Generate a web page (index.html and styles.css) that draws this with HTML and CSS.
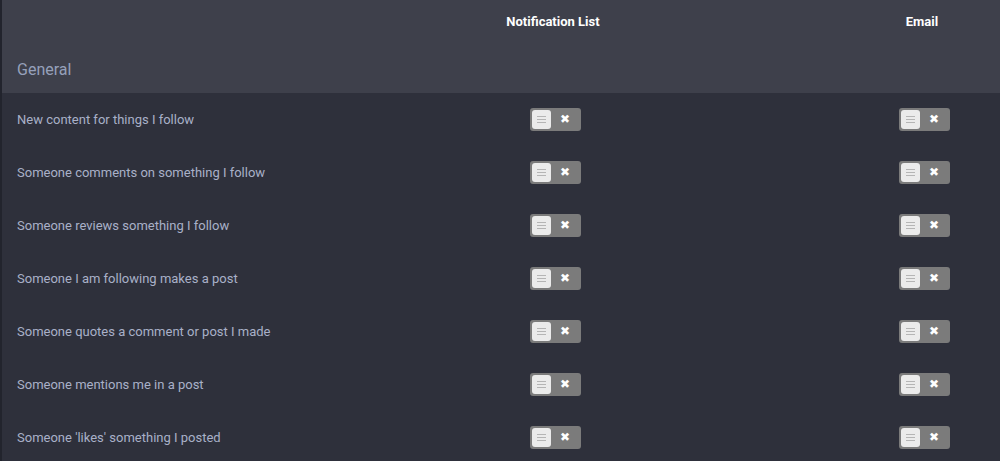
FILE: index.html
```html
<!DOCTYPE html>
<html>
<head>
<meta charset="utf-8">
<link rel="stylesheet" href="styles.css">
</head>
<body>
<div class="panel">
  <div class="head">
    <div class="cols">
      <div class="cell label"></div>
      <div class="cell col-title">Notification List</div>
      <div class="cell col-title">Email</div>
    </div>
    <div class="group">General</div>
  </div>
  <div class="rows">
    <div class="row"><div class="cell label">New content for things I follow</div><div class="cell"><span class="toggle"><span class="knob"><i></i><i></i><i></i></span><span class="x">✖</span></span></div><div class="cell"><span class="toggle"><span class="knob"><i></i><i></i><i></i></span><span class="x">✖</span></span></div></div>
    <div class="row"><div class="cell label">Someone comments on something I follow</div><div class="cell"><span class="toggle"><span class="knob"><i></i><i></i><i></i></span><span class="x">✖</span></span></div><div class="cell"><span class="toggle"><span class="knob"><i></i><i></i><i></i></span><span class="x">✖</span></span></div></div>
    <div class="row"><div class="cell label">Someone reviews something I follow</div><div class="cell"><span class="toggle"><span class="knob"><i></i><i></i><i></i></span><span class="x">✖</span></span></div><div class="cell"><span class="toggle"><span class="knob"><i></i><i></i><i></i></span><span class="x">✖</span></span></div></div>
    <div class="row"><div class="cell label">Someone I am following makes a post</div><div class="cell"><span class="toggle"><span class="knob"><i></i><i></i><i></i></span><span class="x">✖</span></span></div><div class="cell"><span class="toggle"><span class="knob"><i></i><i></i><i></i></span><span class="x">✖</span></span></div></div>
    <div class="row"><div class="cell label">Someone quotes a comment or post I made</div><div class="cell"><span class="toggle"><span class="knob"><i></i><i></i><i></i></span><span class="x">✖</span></span></div><div class="cell"><span class="toggle"><span class="knob"><i></i><i></i><i></i></span><span class="x">✖</span></span></div></div>
    <div class="row"><div class="cell label">Someone mentions me in a post</div><div class="cell"><span class="toggle"><span class="knob"><i></i><i></i><i></i></span><span class="x">✖</span></span></div><div class="cell"><span class="toggle"><span class="knob"><i></i><i></i><i></i></span><span class="x">✖</span></span></div></div>
    <div class="row"><div class="cell label">Someone 'likes' something I posted</div><div class="cell"><span class="toggle"><span class="knob"><i></i><i></i><i></i></span><span class="x">✖</span></span></div><div class="cell"><span class="toggle"><span class="knob"><i></i><i></i><i></i></span><span class="x">✖</span></span></div></div>
  </div>
</div>
</body>
</html>
```
FILE: styles.css
```css
html, body {
  margin: 0;
  padding: 0;
  background: #2e303b;
  font-family: Roboto, "Liberation Sans", sans-serif;
  height: 461px;
  overflow: hidden;
}
.panel {
  border-left: 2px solid #22242d;
  min-height: 461px;
  box-sizing: border-box;
}
.head {
  background: #3e404b;
  height: 93px;
  box-sizing: border-box;
}
.cols, .row {
  display: grid;
  grid-template-columns: 260px 582px 156px;
  align-items: center;
}
.cols {
  height: 42px;
}
.col-title {
  color: #ffffff;
  font-weight: 700;
  font-size: 13px;
  text-align: center;
}
.group {
  padding: 19px 0 0 15px;
  color: #96a0ba;
  font-size: 16px;
  line-height: 18px;
}
.row {
  height: 53px;
}
.label {
  padding-left: 15px;
  color: #a9b0c8;
  font-size: 13px;
  white-space: nowrap;
}
.cell {
  display: flex;
  justify-content: center;
}
.cell.label {
  justify-content: flex-start;
}
.toggle {
  margin-left: 5px;
  width: 51px;
  height: 23px;
  box-sizing: border-box;
  background: #7b7b7b;
  border-radius: 3px;
  display: flex;
  align-items: center;
  padding: 2px;
}
.knob {
  width: 19px;
  height: 19px;
  background: #ebebeb;
  border-radius: 3px;
  display: flex;
  flex-direction: column;
  justify-content: center;
  align-items: center;
  gap: 2px;
}
.knob i {
  display: block;
  width: 9px;
  height: 1px;
  background: #b5b5b5;
}
.x {
  flex: 1;
  text-align: center;
  color: #ffffff;
  font-size: 12px;
  line-height: 19px;
  font-family: "DejaVu Sans", sans-serif;
}
```
